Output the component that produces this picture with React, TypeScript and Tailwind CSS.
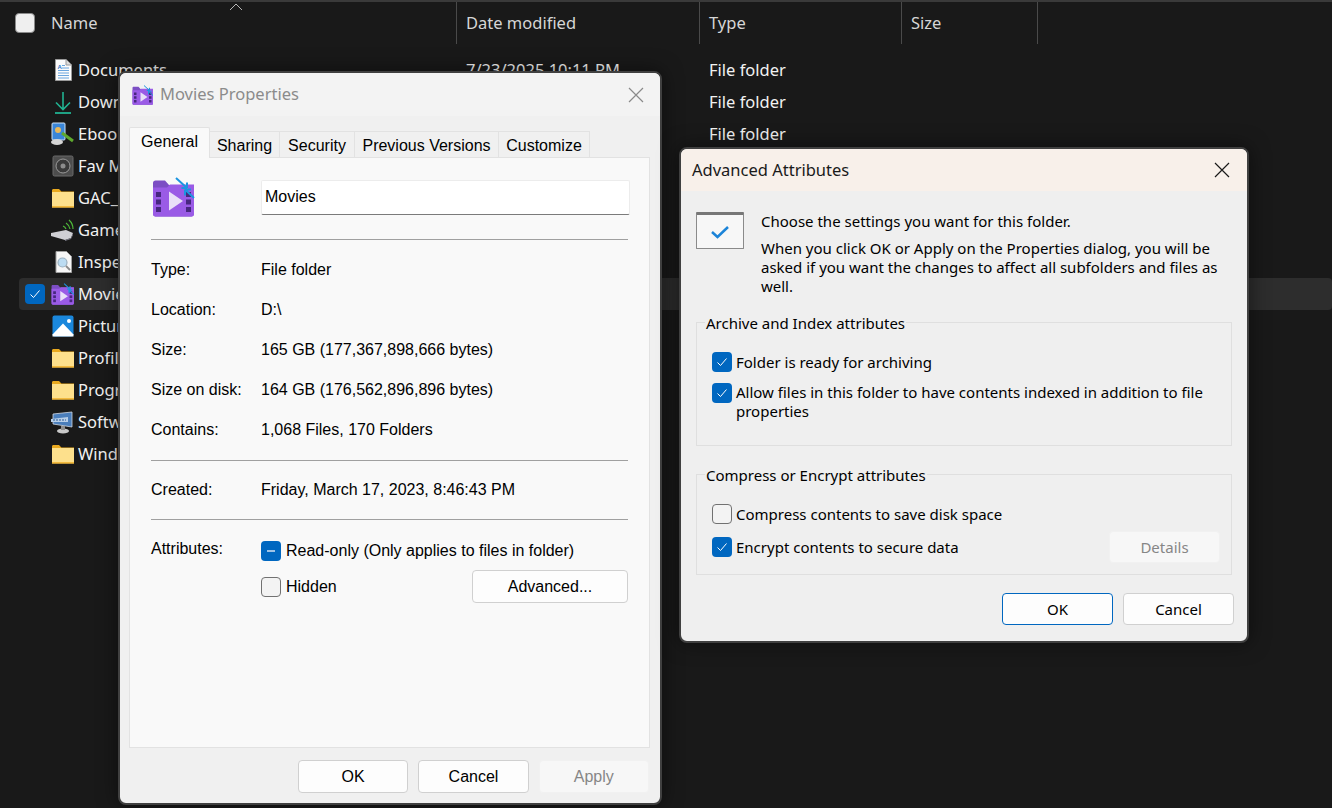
import React from "react";

const Folder = () => (
  <svg width="24" height="22" viewBox="0 0 24 22" className="block">
    <path d="M1 3.5C1 2.7 1.6 2 2.4 2H8l2.4 2.6H23V6H1z" fill="#e9a91f" />
    <rect x="1" y="5" width="22" height="15.5" fill="#fdd263" />
    <rect x="1" y="5" width="22" height="14" fill="#fde08c" />
    <rect x="1" y="19.3" width="22" height="1.2" fill="#eeb02f" />
  </svg>
);

const MovieIcon = ({ size }: { size: number }) => (
  <svg width={size} height={size} viewBox="0 0 44 42" className="block">
    <path d="M1 7c0-1.5 1-2.500 2.500-2.500H13L17 9H42V38c0 1.500-1 2.500-2.500 2.500h-36C2 40.500 1 39.500 1 38z" fill="#7c4ec4" />
    <path d="M1 11.500h14l3-3H42V38c0 1.500-1 2.500-2.500 2.500h-36C2 40.500 1 39.500 1 38z" fill="#9a5be6" />
    <rect x="4" y="16" width="5" height="5" fill="#47277f" />
    <rect x="4" y="23.500" width="5" height="5" fill="#47277f" />
    <rect x="4" y="31" width="5" height="5" fill="#47277f" />
    <rect x="34" y="16" width="5" height="5" fill="#47277f" />
    <rect x="34" y="23.500" width="5" height="5" fill="#47277f" />
    <rect x="34" y="31" width="5" height="5" fill="#47277f" />
    <path d="M17 15.500L31 25 17 34.500z" fill="#e9e0f8" />
    <path d="M24 2l11 10M35 12V6.500M35 12h-5.500M42 22L33 13.500M33 13.500v6M33 13.500h6" stroke="#1c95e0" strokeWidth="2" fill="none" />
  </svg>
);

const DocIcon = () => (
  <svg width="24" height="24" viewBox="0 0 24 24" className="block">
    <path d="M4.500 1.500H15L20.500 7V22.500H4.500z" fill="#fbfbfb" stroke="#9a9a9a" />
    <path d="M15 1.500V7h5.500" fill="#dcdcdc" stroke="#9a9a9a" />
    <text x="6.500" y="10.500" fontSize="6" fontWeight="700" fill="#2b6fc4" fontFamily="Liberation Sans, sans-serif">A</text>
    <path d="M11 7.500h3M11 10h7M7 12.500h11M7 15h11M7 17.500h11M7 20h11" stroke="#6aa5de" strokeWidth="1" />
  </svg>
);

const DownloadIcon = () => (
  <svg width="24" height="24" viewBox="0 0 24 24" className="block">
    <path d="M12 2v17M5 12.500l7 7 7-7" stroke="#21b291" strokeWidth="1.600" fill="none" />
    <path d="M4 23h16" stroke="#21b291" strokeWidth="1.800" />
  </svg>
);

const EbookIcon = () => (
  <svg width="26" height="24" viewBox="0 0 26 24" className="block">
    <rect x="2" y="1" width="13" height="17" rx="1" fill="#3a86d8" stroke="#cfe2f5" />
    <ellipse cx="7" cy="20" rx="6" ry="3" fill="#d5d5d5" />
    <circle cx="8" cy="8" r="3" fill="#e8b85a" />
    <path d="M12 11l11 8" stroke="#5ea82e" strokeWidth="3" />
  </svg>
);

const SpeakerIcon = () => (
  <svg width="24" height="24" viewBox="0 0 24 24" className="block">
    <rect x="2" y="2" width="20" height="20" rx="1.500" fill="#4d4d4d" stroke="#6a6a6a" />
    <circle cx="12" cy="12" r="7" fill="#3a3a3a" stroke="#9a9a9a" />
    <circle cx="12" cy="12" r="2.500" fill="#8d8d8d" />
  </svg>
);

const GameIcon = () => (
  <svg width="26" height="24" viewBox="0 0 26 24" className="block">
    <path d="M1 15l15-3 7 3-2 5-6 2-14-4z" fill="#cfcfd4" />
    <path d="M15 22l6-2 2-5v2l-2 4-6 2z" fill="#7a7a86" />
    <path d="M13 8a6 6 0 0 1 3 3M16 5a9 9 0 0 1 4 6M19 2a12 12 0 0 1 4 9" stroke="#4eb93a" strokeWidth="1.200" fill="none" />
  </svg>
);

const InspectIcon = () => (
  <svg width="24" height="24" viewBox="0 0 24 24" className="block">
    <path d="M5 1.500H15.500L20.500 6.500V22.500H5z" fill="#f6f6f6" stroke="#a0a0a0" />
    <circle cx="11.500" cy="12.500" r="4.500" fill="#bcdcf2" stroke="#9bb0bf" strokeWidth="1.200" />
    <path d="M15 16l4 4" stroke="#8a8a8a" strokeWidth="1.800" />
  </svg>
);

const PictureIcon = () => (
  <svg width="24" height="24" viewBox="0 0 24 24" className="block">
    <rect x="1.500" y="1.500" width="21" height="21" rx="2" fill="#1a87dc" />
    <circle cx="18" cy="7" r="2" fill="#ffffff" />
    <path d="M1.500 20.500L12 9.500 22.500 20.500V22.500H1.500z" fill="#ffffff" />
  </svg>
);

const SoftwareIcon = () => (
  <svg width="26" height="24" viewBox="0 0 26 24" className="block">
    <path d="M3 4l19-2v15l-19-3z" fill="#4a7ebb" stroke="#d0d8e2" strokeWidth="0.800" />
    <path d="M1 9l17-2v5L1 12z" fill="#b8cfe8" />
    <path d="M3 10h13" stroke="#2a5a94" strokeWidth="1.200" strokeDasharray="2 1" />
    <ellipse cx="13" cy="21" rx="6" ry="2.500" fill="#c9c9c9" />
    <rect x="11" y="16" width="4" height="4" fill="#8e8e8e" />
  </svg>
);

const Check = () => (
  <svg width="12" height="12" viewBox="0 0 12 12" className="block">
    <path d="M1.500 6.500l3 3 6-7" stroke="#ffffff" strokeWidth="1" fill="none" />
  </svg>
);

const CloseX = ({ color }: { color: string }) => (
  <svg width="16" height="16" viewBox="0 0 16 16" className="block">
    <path d="M1 1l14 14M15 1L1 15" stroke={color} strokeWidth="1.200" fill="none" />
  </svg>
);

const Box = ({ kind }: { kind: "check" | "dash" | "empty" }) =>
  kind === "empty" ? (
    <span className="block w-5 h-5 shrink-0 rounded-[4px] bg-[#f3f3f3] border border-[#717171]" />
  ) : (
    <span className="flex items-center justify-center w-5 h-5 shrink-0 rounded-[4px] bg-[#0067c0]">
      {kind === "check" ? <Check /> : <span className="block w-2 h-[2px] bg-[#9ec3e6]" />}
    </span>
  );

const files: { name: string; icon: React.ReactNode }[] = [
  { name: "Documents", icon: <DocIcon /> },
  { name: "Downloads", icon: <DownloadIcon /> },
  { name: "Ebooks", icon: <EbookIcon /> },
  { name: "Fav Movies", icon: <SpeakerIcon /> },
  { name: "GAC_MSIL", icon: <Folder /> },
  { name: "Games", icon: <GameIcon /> },
  { name: "Inspect", icon: <InspectIcon /> },
  { name: "Movies", icon: <MovieIcon size={24} /> },
  { name: "Pictures", icon: <PictureIcon /> },
  { name: "Profiles", icon: <Folder /> },
  { name: "Programs", icon: <Folder /> },
  { name: "Software", icon: <SoftwareIcon /> },
  { name: "Windows", icon: <Folder /> },
];

const HeaderCell = ({ label, w }: { label: string; w: string }) => (
  <div className={`${w} h-full flex items-center pl-[9px] border-r border-[#4a4a4a]`}>{label}</div>
);

const Explorer = () => (
  <div className="w-full h-full bg-[#191919] text-[#f2f2f2] font-['Noto_Sans','Open_Sans',sans-serif] text-[16.500px]">
    <div className="h-[2px] bg-[#3a3a3a]" />
    <div className="relative flex h-[42px] text-[#d6d6d6]">
      <div className="w-[457px] h-full flex items-center pl-[15px] gap-4 border-r border-[#4a4a4a]">
        <span className="block w-5 h-5 rounded-[4px] bg-[#efefef] border border-[#8a8a8a]" />
        <span>Name</span>
      </div>
      <HeaderCell label="Date modified" w="w-[243px]" />
      <HeaderCell label="Type" w="w-[202px]" />
      <HeaderCell label="Size" w="w-[136px]" />
      <svg width="14" height="8" viewBox="0 0 14 8" className="absolute left-[229px] top-[1px]">
        <path d="M1 7l6-6 6 6" stroke="#b5b5b5" strokeWidth="1" fill="none" />
      </svg>
    </div>
    <div className="flex flex-col pt-[10px] pl-[19px]">
      {files.map((f, i) => {
        const selected = f.name === "Movies";
        return (
          <div
            key={f.name}
            className={`flex items-center h-8 rounded-[4px] ${selected ? "bg-[#2d2d2d]" : ""}`}
          >
            <div className="w-[28px] pl-[6px] shrink-0">{selected && <Box kind="check" />}</div>
            <div className="w-[31px] shrink-0 flex justify-center">{f.icon}</div>
            <div className="w-[388px] shrink-0">{f.name}</div>
            <div className="w-[243px] shrink-0">7/23/2025 10:11 PM</div>
            <div>File folder</div>
          </div>
        );
      })}
    </div>
  </div>
);

const Tab = ({ label, w, active }: { label: string; w: string; active?: boolean }) => (
  <div
    className={`${w} flex items-center justify-center border border-[#e2e2e2] ${
      active
        ? "h-[31px] bg-[#f9f9f9] border-b-0 rounded-t-[2px] relative z-10 -mb-px pb-[2px]"
        : "h-[26px] bg-[#f0f0f0] border-l-0 border-b-0 pt-[2px]"
    }`}
  >
    {label}
  </div>
);

const Row = ({ k, v }: { k: string; v: string }) => (
  <div className="flex items-center h-10">
    <div className="w-[110px] shrink-0">{k}</div>
    <div>{v}</div>
  </div>
);

const Btn = ({
  label,
  w,
  variant = "normal",
}: {
  label: string;
  w: string;
  variant?: "normal" | "disabled" | "primary";
}) => (
  <div
    className={`${w} flex items-center justify-center rounded-[4px] border ${
      variant === "disabled"
        ? "bg-[#f7f7f7] border-[#f1f1f1] text-[#868686]"
        : variant === "primary"
          ? "bg-[#fdfdfd] border-[#0067c0]"
          : "bg-[#fdfdfd] border-[#d0d0d0]"
    }`}
  >
    {label}
  </div>
);

const Properties = () => (
  <div className="absolute left-[118px] top-[71px] w-[544px] h-[734px] flex flex-col rounded-[8px] border-2 border-[#404040] bg-[#f0f0f0] overflow-hidden font-['Liberation_Sans',Arial,sans-serif] text-[16px] text-black shadow-[0_0_20px_rgba(0,0,0,0.5)]">
    <div className="h-[43px] shrink-0 flex items-center justify-between pl-[12px] pr-[16px] bg-[#f3f3f3] font-['Noto_Sans','Open_Sans',sans-serif] text-[#8b8b8b] text-[16.500px]">
      <div className="flex items-center gap-[6px]">
        <MovieIcon size={22} />
        <span>Movies Properties</span>
      </div>
      <CloseX color="#8a8a8a" />
    </div>
    <div className="flex flex-col flex-1 pt-[10px] pl-[9px] pr-[11px]">
      <div className="flex items-end h-[31px] relative">
        <Tab label="General" w="w-[81px]" active />
        <Tab label="Sharing" w="w-[70px]" />
        <Tab label="Security" w="w-[75px]" />
        <Tab label="Previous Versions" w="w-[144px]" />
        <Tab label="Customize" w="w-[91px]" />
      </div>
      <div className="h-[591px] w-[521px] bg-[#f9f9f9] border border-[#e2e2e2] px-[21px]">
        <div className="flex items-center h-[82px] border-b border-[#a0a0a0] pb-[2px]">
          <div className="w-[110px] shrink-0 pl-[1px] -mt-[2px]">
            <MovieIcon size={44} />
          </div>
          <div className="w-[369px] h-[35px] -mr-[3px] flex items-start pt-[4px] pl-[3px] bg-white border border-[#ececec] border-b-[#7b7b7b] rounded-[2px]">
            Movies
          </div>
        </div>
        <div className="py-[10px] border-b border-[#a0a0a0]">
          <Row k="Type:" v="File folder" />
          <Row k="Location:" v="D:\" />
          <Row k="Size:" v="165 GB (177,367,898,666 bytes)" />
          <Row k="Size on disk:" v="164 GB (176,562,896,896 bytes)" />
          <Row k="Contains:" v="1,068 Files, 170 Folders" />
        </div>
        <div className="py-[9px] border-b border-[#a0a0a0]">
          <Row k="Created:" v="Friday, March 17, 2023, 8:46:43 PM" />
        </div>
        <div className="flex pt-[19px]">
          <div className="w-[110px] shrink-0 leading-5">Attributes:</div>
          <div className="flex-1 flex flex-col">
            <div className="flex items-center gap-[5px] h-5 mt-[2px]">
              <Box kind="dash" />
              <span>Read-only (Only applies to files in folder)</span>
            </div>
            <div className="flex items-center mt-[9px] justify-between">
              <div className="flex items-center gap-[5px] h-5">
                <Box kind="empty" />
                <span>Hidden</span>
              </div>
              <Btn label="Advanced..." w="w-[156px] h-[33px]" />
            </div>
          </div>
        </div>
      </div>
      <div className="flex gap-[10px] mt-[12px] pl-[169px] h-[33px] text-[16px]">
        <Btn label="OK" w="w-[111px]" />
        <Btn label="Cancel" w="w-[111px]" />
        <Btn label="Apply" w="w-[111px]" variant="disabled" />
      </div>
    </div>
  </div>
);

const Group = ({ title, h, children }: { title: string; h: string; children: React.ReactNode }) => (
  <div className={`relative ${h} border border-[#dfdfdf] pl-[15px] pr-[11px]`}>
    <span className="absolute left-[8px] -top-[10px] leading-5 px-[1px] bg-[#efefef]">{title}</span>
    {children}
  </div>
);

const Advanced = () => (
  <div className="absolute left-[679px] top-[147px] w-[570px] h-[496px] flex flex-col rounded-[8px] border-2 border-[#404040] bg-[#efefef] overflow-hidden font-['Noto_Sans','Open_Sans',sans-serif] text-[15px] text-black shadow-[0_0_20px_rgba(0,0,0,0.5)]">
    <div className="h-[42px] shrink-0 flex items-center justify-between pl-[11px] pr-[17px] bg-[#f8f0ea] text-[16.500px] text-[#1a1a1a]">
      <span>Advanced Attributes</span>
      <CloseX color="#1a1a1a" />
    </div>
    <div className="flex flex-col px-[15px] flex-1">
      <div className="flex pt-[21px] h-[131px] pl-0">
        <div className="w-[48px] h-[37px] shrink-0 border border-[#8a8a8a] border-t-[3px] border-t-[#777777] bg-[#f7f7f7] flex items-center justify-center rounded-[1px]">
          <svg width="20" height="16" viewBox="0 0 20 16" className="block">
            <path d="M2 8l5.500 5L18 3" stroke="#1c84d8" strokeWidth="2.500" fill="none" />
          </svg>
        </div>
        <div className="ml-[17px] leading-[19px] w-[480px]">
          <div>Choose the settings you want for this folder.</div>
          <div className="mt-2 w-[470px]">
            When you click OK or Apply on the Properties dialog, you will be asked if you want the changes to affect all subfolders and files as well.
          </div>
        </div>
      </div>
      <Group title="Archive and Index attributes" h="h-[124px] w-[536px]">
        <div className="flex items-center gap-[4px] mt-[29px] h-5">
          <Box kind="check" />
          <span>Folder is ready for archiving</span>
        </div>
        <div className="flex gap-[4px] mt-[11px] leading-[19px]">
          <Box kind="check" />
          <span>Allow files in this folder to have contents indexed in addition to file properties</span>
        </div>
      </Group>
      <div className="h-[28px] shrink-0" />
      <Group title="Compress or Encrypt attributes" h="h-[101px] w-[536px]">
        <div className="flex items-center gap-[4px] mt-[29px] h-5">
          <Box kind="empty" />
          <span>Compress contents to save disk space</span>
        </div>
        <div className="flex items-center justify-between mt-[13px] h-5">
          <div className="flex items-center gap-[4px]">
            <Box kind="check" />
            <span>Encrypt contents to secure data</span>
          </div>
          <Btn label="Details" w="w-[111px] h-[32px]" variant="disabled" />
        </div>
      </Group>
      <div className="flex justify-end gap-[10px] mt-[18px] h-[32px] -mr-[2px]">
        <Btn label="OK" w="w-[111px]" variant="primary" />
        <Btn label="Cancel" w="w-[111px]" />
      </div>
    </div>
  </div>
);

export default function App() {
  return (
    <div className="relative w-[1332px] h-[808px] overflow-hidden">
      <Explorer />
      <Properties />
      <Advanced />
    </div>
  );
}
